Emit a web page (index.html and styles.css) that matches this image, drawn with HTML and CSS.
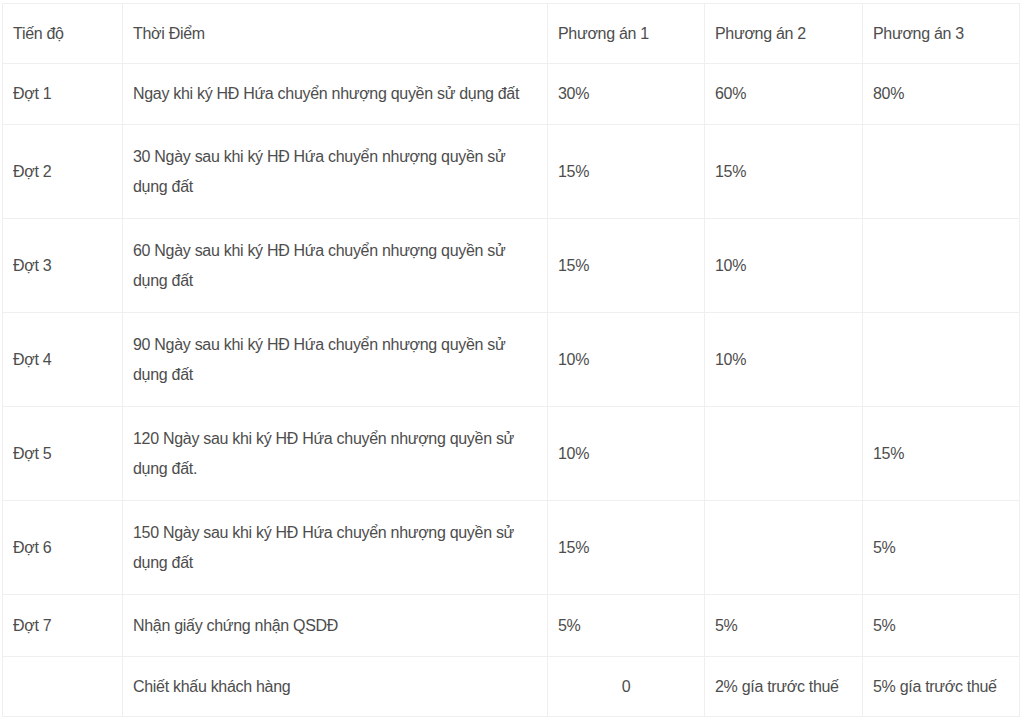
FILE: index.html
```html
<!DOCTYPE html>
<html lang="vi">
<head>
<meta charset="utf-8">
<title>Tiến độ thanh toán</title>
<link rel="stylesheet" href="styles.css">
</head>
<body>
<table class="pay">
  <colgroup>
    <col class="c1"><col class="c2"><col class="c3"><col class="c4"><col class="c5">
  </colgroup>
  <tr class="head"><td>Tiến độ</td><td>Thời Điểm</td><td>Phương án 1</td><td>Phương án 2</td><td>Phương án 3</td></tr>
  <tr><td>Đợt 1</td><td>Ngay khi ký HĐ Hứa chuyển nhượng quyền sử dụng đất</td><td>30%</td><td>60%</td><td>80%</td></tr>
  <tr class="tall"><td>Đợt 2</td><td>30 Ngày sau khi ký HĐ Hứa chuyển nhượng quyền sử<br>dụng đất</td><td>15%</td><td>15%</td><td></td></tr>
  <tr class="tall"><td>Đợt 3</td><td>60 Ngày sau khi ký HĐ Hứa chuyển nhượng quyền sử<br>dụng đất</td><td>15%</td><td>10%</td><td></td></tr>
  <tr class="tall"><td>Đợt 4</td><td>90 Ngày sau khi ký HĐ Hứa chuyển nhượng quyền sử<br>dụng đất</td><td>10%</td><td>10%</td><td></td></tr>
  <tr class="tall"><td>Đợt 5</td><td>120 Ngày sau khi ký HĐ Hứa chuyển nhượng quyền sử<br>dụng đất.</td><td>10%</td><td></td><td>15%</td></tr>
  <tr class="tall"><td>Đợt 6</td><td>150 Ngày sau khi ký HĐ Hứa chuyển nhượng quyền sử<br>dụng đất</td><td>15%</td><td></td><td>5%</td></tr>
  <tr class="row7"><td>Đợt 7</td><td>Nhận giấy chứng nhận QSDĐ</td><td>5%</td><td>5%</td><td>5%</td></tr>
  <tr class="last"><td></td><td>Chiết khấu khách hàng</td><td class="center">0</td><td>2% gía trước thuế</td><td>5% gía trước thuế</td></tr>
</table>
</body>
</html>
```
FILE: styles.css
```css
html, body {
  margin: 0;
  padding: 0;
  background: #ffffff;
}
.pay {
  margin: 3px 0 0 2px;
  width: 1017px;
  border-collapse: collapse;
  table-layout: fixed;
  font-family: "Liberation Sans", Arial, sans-serif;
  font-size: 16px;
  letter-spacing: -0.3px;
  color: #4d4d4d;
}
.c1 { width: 120px; }
.c2 { width: 425px; }
.c3 { width: 157px; }
.c4 { width: 158px; }
.c5 { width: 157px; }
.pay td {
  border: 1px solid #efefef;
  padding: 0 10px;
  height: 60px;
  line-height: 30px;
  vertical-align: middle;
  white-space: nowrap;
}
.pay tr.head td { height: 59px; }
.pay tr.tall td { height: 93px; }
.pay tr.row7 td { height: 61px; }
.pay tr.last td { height: 59px; }
.pay td.center { text-align: center; }
```
